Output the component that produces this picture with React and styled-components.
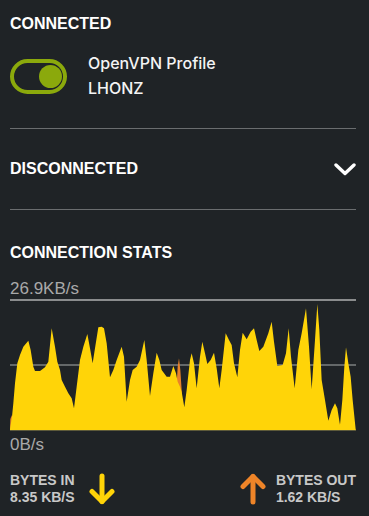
import React from "react";
import styled, { createGlobalStyle } from "styled-components";

const Global = createGlobalStyle`
  html, body { margin: 0; padding: 0; background: #1f2326; }
  body { font-family: "Liberation Sans", Arial, sans-serif; }
`;

const Page = styled.div`
  width: 369px;
  min-height: 516px;
  box-sizing: border-box;
  padding: 14px 13px 0 10px;
  background: #1f2326;
  color: #fff;
`;

const Heading = styled.h2`
  margin: 0;
  font: 700 16px/20px "Liberation Sans", Arial, sans-serif;
  color: #fff;
  text-transform: uppercase;
`;

const ProfileRow = styled.div`
  display: flex;
  align-items: center;
  gap: 21px;
  margin-top: 17px;
`;

const Toggle = styled.div`
  width: 57px;
  height: 35px;
  box-sizing: border-box;
  border: 4px solid #8ba90c;
  border-radius: 18px;
  display: flex;
  align-items: center;
  justify-content: ${(p) => (p.on ? "flex-end" : "flex-start")};
  padding: 0 1px;
`;

const Knob = styled.span`
  width: 23px;
  height: 23px;
  border-radius: 50%;
  background: #8ba90c;
`;

const ProfileText = styled.div`
  display: flex;
  flex-direction: column;
  font: 500 16px/25px Inter, "Liberation Sans", sans-serif;
  color: #f4f4f4;
`;

const Divider = styled.hr`
  margin: ${(p) => p.mt || 0}px 0 0 0;
  border: 0;
  height: 1px;
  background: #6a6d6f;
`;

const CollapseRow = styled.div`
  display: flex;
  align-items: center;
  justify-content: space-between;
  padding: 30px 0;
`;

const StatsHeading = styled(Heading)`
  margin-top: 33px;
`;

const AxisLabel = styled.div`
  margin-top: ${(p) => p.mt}px;
  font: 400 17px/20px "Liberation Sans", Arial, sans-serif;
  color: #a9a9a9;
`;

const ChartSvg = styled.svg`
  display: block;
  width: 346px;
  height: 132px;
`;

const BottomRow = styled.div`
  display: flex;
  align-items: center;
  justify-content: space-between;
  margin-top: 17px;
`;

const Group = styled.div`
  display: flex;
  align-items: center;
  gap: ${(p) => p.gap}px;
`;

const Stat = styled.div`
  display: flex;
  flex-direction: column;
  font: 700 14px/17px "Liberation Sans", Arial, sans-serif;
  color: #c8c8c8;
  text-transform: uppercase;
`;

const yellowPts = [
  [30, 418], [36, 380], [40, 340], [45, 280], [52, 220], [60, 195], [70, 170], [85, 152],
  [92, 180], [100, 230], [105, 243], [120, 243], [135, 232], [145, 215], [155, 115],
  [165, 170], [172, 215], [180, 240], [185, 270], [195, 290], [205, 310], [215, 325],
  [222, 355], [230, 290], [240, 210], [250, 170], [262, 132], [270, 175], [278, 220],
  [285, 175], [295, 112], [305, 110], [312, 115], [320, 160], [330, 262], [340, 240],
  [350, 210], [365, 170], [372, 200], [380, 335], [390, 270], [398, 240], [410, 230],
  [420, 210], [433, 150], [440, 210], [450, 318], [460, 250], [470, 188], [478, 210],
  [485, 240], [500, 260], [510, 260], [520, 228], [528, 250], [533, 275], [540, 290],
  [545, 305], [553, 352], [560, 300], [570, 210], [575, 190], [582, 220], [590, 295],
  [600, 200], [607, 155], [615, 190], [622, 222], [632, 210], [642, 188], [650, 235],
  [658, 295], [665, 240], [677, 130], [687, 150], [695, 165], [702, 220], [712, 262],
  [720, 180], [728, 128], [740, 148], [752, 125], [762, 115], [770, 150], [778, 183],
  [790, 170], [805, 130], [815, 95], [822, 155], [832, 228], [848, 225], [858, 190],
  [866, 115], [873, 200], [884, 295], [895, 180], [905, 130], [918, 55], [927, 170],
  [935, 298], [945, 150], [952, 42], [958, 120], [965, 270], [975, 330], [985, 392],
  [995, 360], [1005, 340], [1012, 355], [1020, 405], [1027, 330], [1033, 230],
  [1038, 172], [1045, 220], [1052, 260], [1058, 330], [1067, 418],
];

const orangePts = [
  [30, 418], [31, 388], [35, 375], [40, 418], [526, 418], [529, 300], [533, 230],
  [537, 205], [541, 240], [545, 300], [550, 418], [1015, 418], [1020, 398], [1025, 418],
  [1067, 418],
];

const toPath = (pts) =>
  "M" + pts.map(([x, y]) => `${x} ${y}`).join(" L") + " L1067 421 L30 421 Z";

function Chart() {
  return (
    <ChartSvg viewBox="0 0 346 132">
      <line x1="0" x2="346" y1="1" y2="1" stroke="#8a8c8d" strokeWidth="2" />
      <line x1="0" x2="346" y1="66" y2="66" stroke="#7d8081" strokeWidth="1.5" />
      <g transform="translate(-10,-9) scale(0.33333)">
        <path d={toPath(orangePts)} fill="#e8822a" />
        <path d={toPath(yellowPts)} fill="#ffd408" />
      </g>
      <line x1="0" x2="346" y1="131.5" y2="131.5" stroke="#5d5a3a" strokeWidth="1" />
    </ChartSvg>
  );
}

const Chevron = () => (
  <svg width="22" height="14" viewBox="0 0 22 14">
    <polyline points="2,3 11,11.5 20,3" fill="none" stroke="#fff" strokeWidth="3.4" strokeLinecap="round" strokeLinejoin="round" />
  </svg>
);

const Arrow = ({ up, color }) => (
  <svg width="26" height="32" viewBox="0 0 26 32" style={{ transform: up ? "rotate(180deg)" : "none" }}>
    <g fill="none" stroke={color} strokeWidth="5" strokeLinecap="round" strokeLinejoin="round">
      <path d="M13 3 V28.5" />
      <path d="M3 18.5 L13 28.5 L23 18.5" />
    </g>
  </svg>
);

export default function App() {
  return (
    <>
      <Global />
      <Page>
        <Heading>Connected</Heading>
        <ProfileRow>
          <Toggle on>
            <Knob />
          </Toggle>
          <ProfileText>
            <span>OpenVPN Profile</span>
            <span>LHONZ</span>
          </ProfileText>
        </ProfileRow>
        <Divider mt={27} />
        <CollapseRow>
          <Heading>Disconnected</Heading>
          <Chevron />
        </CollapseRow>
        <Divider />
        <StatsHeading>Connection Stats</StatsHeading>
        <AxisLabel mt={16}>26.9KB/s</AxisLabel>
        <Chart />
        <AxisLabel mt={4}>0B/s</AxisLabel>
        <BottomRow>
          <Group gap={14}>
            <Stat>
              <span>Bytes In</span>
              <span>8.35 KB/S</span>
            </Stat>
            <Arrow color="#ffd408" />
          </Group>
          <Group gap={10}>
            <Arrow up color="#ee8428" />
            <Stat>
              <span>Bytes Out</span>
              <span>1.62 KB/S</span>
            </Stat>
          </Group>
        </BottomRow>
      </Page>
    </>
  );
}
